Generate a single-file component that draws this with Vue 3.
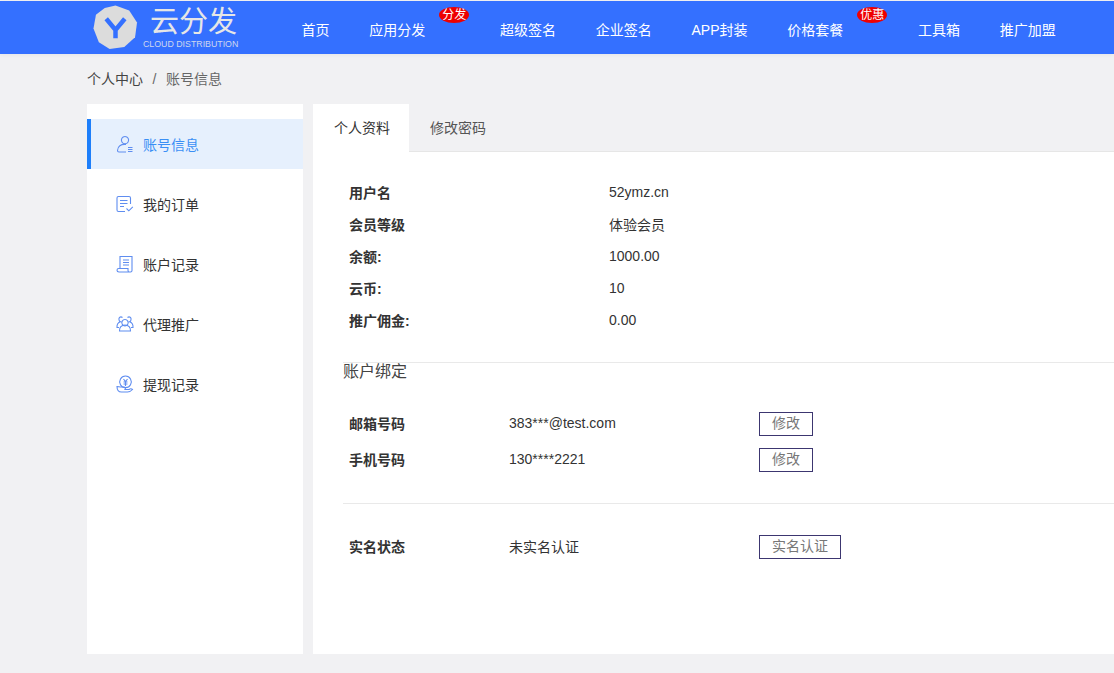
<template>
  <div class="page">
    <header class="topbar">
      <div class="logo">
        <svg class="logo-mark" viewBox="0 0 46 46" width="45" height="45">
          <polygon points="23,0.5 37,5.5 45,18 43,33 32,43 17,45 6,38 0.5,24 3,10 12,3" fill="#dcdcdc" />
          <path d="M13.5 14 L23 25.500 L32.5 14 M23 25.500 V34" fill="none" stroke="#3470ff" stroke-width="4.6" />
        </svg>
        <div class="logo-text">
          <div class="logo-name">云分发</div>
          <div class="logo-sub">CLOUD DISTRIBUTION</div>
        </div>
      </div>
      <nav class="nav">
        <a
          v-for="item in navItems"
          :key="item.label"
          class="nav-item"
          :class="{ 'has-badge': item.badge }"
        >
          {{ item.label }}
          <span v-if="item.badge" class="nav-badge">{{ item.badge }}</span>
        </a>
      </nav>
    </header>

    <div class="crumbs">
      <span class="crumb-root">个人中心</span>
      <span class="crumb-sep">/</span>
      <span class="crumb-current">账号信息</span>
    </div>

    <div class="body">
      <aside class="side">
        <a
          v-for="(item, index) in sideItems"
          :key="item.label"
          class="side-item"
          :class="{ active: index === 0 }"
        >
          <svg class="side-icon" viewBox="0 0 18 18" width="18" height="18" fill="none" stroke="#5f8df0" stroke-width="1.1">
            <path v-for="d in item.paths" :key="d" :d="d" />
          </svg>
          <span>{{ item.label }}</span>
        </a>
      </aside>

      <main class="main">
        <div class="tabs">
          <a class="tab active">个人资料</a>
          <a class="tab">修改密码</a>
        </div>

        <section class="profile">
          <div v-for="row in profile" :key="row.label" class="profile-row">
            <span class="label">{{ row.label }}</span>
            <span class="value">{{ row.value }}</span>
          </div>
        </section>

        <section class="binding">
          <div class="binding-title">账户绑定</div>
          <div class="bind-list">
            <div v-for="row in bindings" :key="row.label" class="bind-row">
              <span class="label">{{ row.label }}</span>
              <span class="bind-value">{{ row.value }}</span>
              <a class="btn">修改</a>
            </div>
          </div>
        </section>

        <section class="realname">
          <div class="bind-row">
            <span class="label">实名状态</span>
            <span class="bind-value">未实名认证</span>
            <a class="btn">实名认证</a>
          </div>
        </section>
      </main>
    </div>
  </div>
</template>

<script setup>
const navItems = [
  { label: "首页" },
  { label: "应用分发", badge: "分发" },
  { label: "超级签名" },
  { label: "企业签名" },
  { label: "APP封装" },
  { label: "价格套餐", badge: "优惠" },
  { label: "工具箱" },
  { label: "推广加盟" },
];

const sideItems = [
  {
    label: "账号信息",
    paths: [
      "M9 1.5a3.6 3.6 0 1 1-.01 0z",
      "M10 9.5C5 8.8 1.5 11.5 1.5 15.5 1.5 16.5 2 17 3 17h7",
      "M12 12.5h4.5M12 14.5h4.5M12 16.5h4.5",
    ],
  },
  {
    label: "我的订单",
    paths: [
      "M14.5 9V3c0-1-.6-1.5-1.5-1.5H2.5C1.5 1.5 1 2 1 3v12c0 1 .5 1.5 1.5 1.5H9",
      "M4 5.5h7.5M4 8.5h7.5M4 11.5h4",
      "M10.5 13.5l2.3 2.3 4-4",
    ],
  },
  {
    label: "账户记录",
    paths: [
      "M4 13.5V1.5h12v14c0 1-.6 1.5-1.5 1.5H3c-1.2 0-2-.8-2-1.7 0-1 .6-1.8 1.7-1.8H12v2c0 1 .6 1.5 1.5 1.5",
      "M7 5h6M7 7.5h6M7 10h6",
    ],
  },
  {
    label: "代理推广",
    paths: [
      "M9 4.5a3.2 3.2 0 1 1-.01 0z",
      "M3.5 16c-.3-3.5 2-6 5.500-6s5.800 2.500 5.500 6z",
      "M6.500 2.500C4.500 1 2.500 2.500 3 4.800c.2 1 .8 1.700 1.500 2C2 7.500 .8 9.500 1 12.500h2",
      "M11.500 2.500c2-1.500 4 0 3.500 2.300-.2 1-.8 1.700-1.500 2 2.500.7 3.700 2.700 3.500 5.700h-2",
    ],
  },
  {
    label: "提现记录",
    paths: [
      "M9.500 1a5.800 5.800 0 1 1-.01 0z",
      "M7.500 4l2 2.500 2-2.500M7.500 7h4M7.500 9h4M9.500 6.500V11",
      "M1 11.500c0 3.500 2 5.500 4.500 5.500h6c1.500 0 3.500-.8 5-2.500-1-1-2.500-.8-3.500 0H9c1-1.500 0-2.500-1.500-2.500H5c-1.500 0-2.500-.5-4-.5z",
    ],
  },
];

const profile = [
  { label: "用户名", value: "52ymz.cn" },
  { label: "会员等级", value: "体验会员" },
  { label: "余额:", value: "1000.00" },
  { label: "云币:", value: "10" },
  { label: "推广佣金:", value: "0.00" },
];

const bindings = [
  { label: "邮箱号码", value: "383***@test.com" },
  { label: "手机号码", value: "130****2221" },
];
</script>

<style>
html,
body {
  margin: 0;
  background: #f1f1f3;
}
</style>

<style scoped>
.page {
  width: 1114px;
  height: 673px;
  overflow: hidden;
  background: #f1f1f3;
  font-family: "Liberation Sans", "Noto Sans CJK SC", sans-serif;
  font-size: 14px;
  color: #333;
}

.topbar {
  height: 53px;
  margin-top: 1px;
  background: #3470ff;
  display: flex;
  align-items: center;
  padding-left: 93px;
  box-shadow: 0 1px 4px rgba(0, 0, 0, 0.05);
}

.logo {
  width: 208.5px;
  flex: none;
  display: flex;
  align-items: center;
  gap: 5px;
}

.logo-mark {
  flex: none;
  margin-bottom: 1px;
}

.logo-name {
  font-size: 29px;
  line-height: 33px;
  color: #e6e6e6;
  margin-left: 7px;
}

.logo-sub {
  font-size: 8.8px;
  line-height: 10px;
  color: #cfd8ee;
  white-space: nowrap;
}

.nav {
  display: flex;
  gap: 39.75px;
  margin-top: 3px;
  color: #fff;
}

.nav-item {
  position: relative;
  white-space: nowrap;
}

.nav-item.has-badge {
  margin-right: 35px;
}

.nav-badge {
  position: absolute;
  top: -12px;
  right: -44px;
  width: 30px;
  height: 16px;
  border-radius: 50%;
  background: #ee0000;
  color: #fff;
  font-size: 12px;
  line-height: 16px;
  text-align: center;
}

.crumbs {
  padding: 17px 0 0 87px;
  height: 33px;
  line-height: 17px;
  display: flex;
  gap: 9.5px;
  color: #666;
}

.crumb-root {
  color: #444;
}

.body {
  display: flex;
  gap: 10px;
  padding-left: 87px;
}

.side {
  width: 216px;
  height: 550px;
  flex: none;
  background: #fff;
  padding-top: 15px;
  box-sizing: border-box;
}

.side-item {
  height: 50px;
  margin-bottom: 10px;
  display: flex;
  align-items: center;
  gap: 9px;
  padding-left: 29px;
  box-sizing: border-box;
}

.side-item.active {
  background: #e6f0fd;
  border-left: 4px solid #1e7ffa;
  padding-left: 25px;
  color: #3a8ff5;
}

.main {
  flex: 1;
  height: 550px;
  background: #fff;
}

.tabs {
  display: flex;
  height: 47px;
  background: #f1f1f3;
  border-bottom: 1px solid #e6e6e6;
}

.tab {
  width: 96px;
  padding-left: 2px;
  box-sizing: border-box;
  text-align: center;
  line-height: 48px;
  color: #555;
}

.tab.active {
  height: 48px;
  background: #fff;
  color: #333;
}

.profile {
  padding: 24px 0 26px 36px;
}

.profile-row {
  height: 32px;
  display: flex;
  align-items: center;
}

.profile-row .label {
  width: 260px;
}

.label {
  font-weight: 700;
  flex: none;
  width: 160px;
}

.binding {
  margin-left: 30px;
  border-top: 1px solid #e9e9e9;
}

.binding-title {
  font-size: 16px;
  line-height: 17px;
  color: #444;
}

.bind-list {
  padding: 32px 0 31px;
  border-bottom: 1px solid #e9e9e9;
  display: flex;
  flex-direction: column;
  gap: 12px;
}

.bind-row {
  display: flex;
  align-items: center;
  height: 24px;
  padding-left: 6px;
}

.bind-row .label,
.bind-value {
  margin-bottom: 2px;
}

.bind-value {
  width: 250px;
  flex: none;
}

.btn {
  border: 1px solid #3c3670;
  height: 22px;
  line-height: 21px;
  padding: 0 12px;
  color: #777;
}

.realname {
  margin-left: 30px;
  padding-top: 31px;
}
</style>
